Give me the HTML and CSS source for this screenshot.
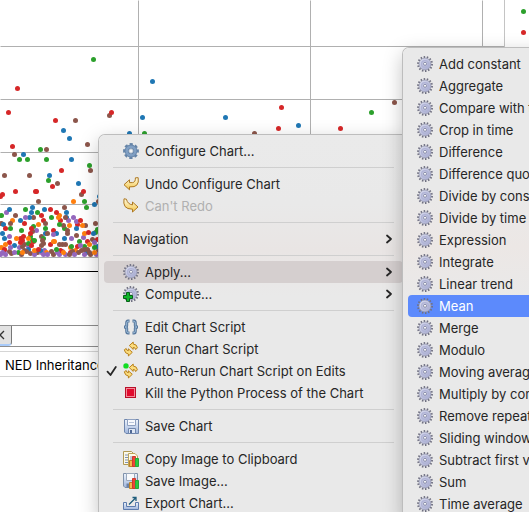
FILE: index.html
```html
<!DOCTYPE html>
<html lang="en">
<head>
<meta charset="utf-8">
<title>Chart editor</title>
<link rel="stylesheet" href="styles.css">
</head>
<body>
<svg class="defs" aria-hidden="true">
  <linearGradient id="lav" x1="0" y1="0" x2="1" y2="1"><stop offset="0" stop-color="#dcdef0"/><stop offset="1" stop-color="#a3a7cc"/></linearGradient>
  <linearGradient id="gold" x1="0" y1="0" x2="0" y2="1"><stop offset="0" stop-color="#fffbe0"/><stop offset="1" stop-color="#f3c548"/></linearGradient>
  <linearGradient id="steel" x1="0" y1="0" x2="0" y2="1"><stop offset="0" stop-color="#eef4fc"/><stop offset="1" stop-color="#9fb5dc"/></linearGradient>
  <symbol id="gear" viewBox="0 0 16 16">
    <circle cx="8" cy="8" r="7" fill="none" stroke="#6f6f80" stroke-width="1.9" stroke-dasharray="1.5 1.642"/>
    <circle cx="8" cy="8" r="6" fill="url(#lav)" stroke="#8d8fa6" stroke-width=".7"/>
    <circle cx="8" cy="8" r="3.4" fill="none" stroke="#b0b4d6" stroke-width="1.4"/>
    <circle cx="8" cy="7.8" r="1.5" fill="#fafafa" stroke="#7a7e9e" stroke-width=".8"/>
  </symbol>
  <symbol id="config" viewBox="0 0 16 16">
    <circle cx="8" cy="8" r="6.7" fill="none" stroke="#6483a6" stroke-width="2.4" stroke-dasharray="3.1 2.162" transform="rotate(-13 8 8)"/>
    <circle cx="8" cy="8" r="4.4" fill="none" stroke="#6786aa" stroke-width="4"/>
    <circle cx="8" cy="8" r="4.3" fill="none" stroke="#809fc3" stroke-width="2.4"/>
    <circle cx="8" cy="8" r="2.2" fill="#f4f4f4" stroke="#5f7d9f" stroke-width=".5"/>
  </symbol>
  <symbol id="undo" viewBox="0 0 16 16">
    <path d="M1 8.7 6.5 3.8V6.6H9.5Q12.6 6.3 12.4 1.8L15.2 1.7Q16 6.8 13.8 9.1Q12 11.2 6.5 10.9V13.8Z" fill="url(#gold)" stroke="#ad7822" stroke-linejoin="round"/>
  </symbol>
  <symbol id="redo" viewBox="0 0 16 16">
    <path d="M15 9 9.5 4V6.9Q4.8 6.4 3.4 1.2L1 .8Q.2 5.6 2 8.5Q4 11.2 9.5 11.2V14Z" fill="url(#gold)" stroke="#ad7822" stroke-linejoin="round"/>
  </symbol>
  <symbol id="compute" viewBox="0 0 16 16">
    <use href="#gear"/>
    <path d="M3.5 6.5h3v3h3v3h-3v3h-3v-3h-3v-3h3Z" fill="#10b52b" stroke="#075f18"/>
  </symbol>
  <symbol id="braces" viewBox="0 0 16 16" fill="none">
    <g stroke="#56779c" stroke-width="3"><path d="M6.5 2H5Q3.7 2 3.7 4V6.5Q3.7 8 1 8Q3.7 8 3.7 9.5V12Q3.7 14 5 14H6.5M9.5 2H11Q12.3 2 12.3 4V6.5Q12.3 8 15 8Q12.3 8 12.3 9.5V12Q12.3 14 11 14H9.5"/></g>
    <g stroke="#9bbbd8"><path d="M6 2.2H5Q3.7 2.2 3.7 4V6.5Q3.7 8 2 8Q3.7 8 3.7 9.5V12Q3.7 13.8 5 13.8H6M10 2.2H11Q12.3 2.2 12.3 4V6.5Q12.3 8 14 8Q12.3 8 12.3 9.5V12Q12.3 13.8 11 13.8H10"/></g>
  </symbol>
  <symbol id="rerun" viewBox="0 0 16 16">
    <g fill="#fbdc7d" stroke="#b9821c" stroke-linejoin="round">
      <path d="M6.3 4.6 10.2 1V3Q14 3.3 14.4 6.8L12.7 8.6Q12.3 6.4 10.2 6.4V8.4Z"/>
      <path d="M9.3 11.3 5.4 15V13Q2 12.7 1.3 8.8L3.2 7.5Q3.5 9.7 5.4 9.7V7.8Z"/>
    </g>
  </symbol>
  <symbol id="autorerun" viewBox="0 0 16 16">
    <use href="#rerun"/>
    <circle cx="3" cy="2.9" r="2.7" fill="#12dc22"/>
  </symbol>
  <symbol id="stop" viewBox="0 0 16 16">
    <rect x="2.5" y="2.5" width="10" height="10" fill="#f48a98" stroke="#b8102a"/>
    <rect x="4" y="4" width="7" height="7" fill="#e00b2d"/>
  </symbol>
  <symbol id="save" viewBox="0 0 16 16">
    <path d="M1.5 1.5H15.5V15.5H3L1.5 14Z" fill="url(#steel)" stroke="#6f86ad"/>
    <path d="M4.5 1.5H12.5V7.5H4.5Z" fill="#f7f9fd" stroke="#8fa1c0"/>
    <path d="M6 4.5H11" stroke="#b9c5da"/>
    <path d="M5.5 10.5H12.5V15.5H5.5Z" fill="#dfe7f4" stroke="#6f86ad"/>
    <path d="M7 12h2v3H7Z" fill="#4f6894"/>
  </symbol>
  <symbol id="bars" viewBox="0 0 16 16">
    <path d="M6.5 9.5h3v6h-3Z" fill="#f2b84c" stroke="#bd8124"/>
    <path d="M9.5 5.5h3v10h-3Z" fill="#ee4536" stroke="#cf3a2e"/>
    <path d="M12.5 7.5h3v8h-3Z" fill="#2ccb3d" stroke="#27a83a"/>
  </symbol>
  <symbol id="copyimg" viewBox="0 0 16 16">
    <path d="M.5.5H8.5L10.5 2.5V13.5H.5Z" fill="#fdf9e8" stroke="#b19a55"/>
    <path d="M2 4H5M2 6.5H5M2 9H5M2 11.5H5" stroke="#7d91b5"/>
    <path d="M5.5 2.5H12L14.5 5V15.5H5.5Z" fill="#fffbe9" stroke="#bda55a"/>
    <path d="M7 6H10M7 8H9" stroke="#8295ba"/>
    <use href="#bars"/>
  </symbol>
  <symbol id="saveimg" viewBox="0 0 16 16">
    <path d="M.5.5H14.5V14.5H2L.5 13Z" fill="url(#steel)" stroke="#7f91ab"/>
    <path d="M3.5.5H11.5V7.5H3.5Z" fill="#f8f9fb" stroke="#9aa8bc"/>
    <path d="M3.5 10.5H8V14.5H3.5Z" fill="#6d81a4"/>
    <use href="#bars"/>
  </symbol>
  <symbol id="export" viewBox="0 0 16 16">
    <path d="M.5 7.5H3.5V11.5H12.5V7.5H15.5V14.5H.5Z" fill="url(#steel)" stroke="#5d7cae"/>
    <path d="M6 9.5 12.5 3M9.5 2.5H13V6" fill="none" stroke="#1e5d7c" stroke-width="1.3"/>
  </symbol>
  <symbol id="tick" viewBox="0 0 12 12">
    <path d="M1.5 6.7 4.5 10 9.8 2" fill="none" stroke="#262626" stroke-width="1.8" stroke-linecap="round" stroke-linejoin="round"/>
  </symbol>
  <symbol id="more" viewBox="0 0 8 10">
    <path d="M2 1.5 6 5 2 8.5" fill="none" stroke="#262626" stroke-width="1.8" stroke-linecap="round" stroke-linejoin="round"/>
  </symbol>
</svg>

<div class="window">
  <main class="editor">
    <svg class="plot" role="img" aria-label="Scatter chart">
      <g class="grid">
        <line x1="0" x2="100%" y1="46" y2="46"/><line x1="0" x2="100%" y1="99" y2="99"/>
        <line x1="0" x2="100%" y1="152" y2="152"/><line x1="0" x2="100%" y1="204" y2="204"/>
        <line x1="138" x2="138" y1="0" y2="257"/><line x1="310" x2="310" y1="0" y2="257"/><line x1="482" x2="482" y1="0" y2="257"/>
      </g>
      <g id="dots"></g>
      <g class="grid"><line x1="0" x2="100%" y1="257" y2="257"/></g>
    </svg>
    <svg class="legend" aria-hidden="true"><circle class="g" cx="18.5" cy="11.5" r="2.5"/><circle class="r" cx="18.5" cy="32.5" r="2.5"/></svg>
  </main>
  <div class="tabs">
    <button class="close" aria-label="Close"><svg viewBox="0 0 5 10"><path d="M-4 1 4 9M4 1-4 9"/></svg></button>
  </div>
  <div class="pane-title">NED Inheritance</div>
</div>

<div class="menu context" role="menu">
  <button role="menuitem"><svg><use href="#config"/></svg>Configure Chart...</button>
  <hr>
  <button role="menuitem"><svg><use href="#undo"/></svg>Undo Configure Chart</button>
  <button role="menuitem" disabled><svg><use href="#redo"/></svg>Can't Redo</button>
  <hr>
  <button role="menuitem">Navigation<svg class="more"><use href="#more"/></svg></button>
  <hr>
  <button role="menuitem" class="open"><svg><use href="#gear"/></svg>Apply...<svg class="more"><use href="#more"/></svg></button>
  <button role="menuitem"><svg><use href="#compute"/></svg>Compute...<svg class="more"><use href="#more"/></svg></button>
  <hr>
  <button role="menuitem"><svg><use href="#braces"/></svg>Edit Chart Script</button>
  <button role="menuitem"><svg><use href="#rerun"/></svg>Rerun Chart Script</button>
  <button role="menuitemcheckbox" aria-checked="true" class="checked"><svg class="tick"><use href="#tick"/></svg><svg><use href="#autorerun"/></svg>Auto-Rerun Chart Script on Edits</button>
  <button role="menuitem"><svg><use href="#stop"/></svg>Kill the Python Process of the Chart</button>
  <hr>
  <button role="menuitem"><svg><use href="#save"/></svg>Save Chart</button>
  <hr>
  <button role="menuitem"><svg><use href="#copyimg"/></svg>Copy Image to Clipboard</button>
  <button role="menuitem"><svg><use href="#saveimg"/></svg>Save Image...</button>
  <button role="menuitem"><svg><use href="#export"/></svg>Export Chart...</button>
</div>

<div class="menu submenu" role="menu">
  <button role="menuitem"><svg><use href="#gear"/></svg>Add constant</button>
  <button role="menuitem"><svg><use href="#gear"/></svg>Aggregate</button>
  <button role="menuitem"><svg><use href="#gear"/></svg>Compare with threshold</button>
  <button role="menuitem"><svg><use href="#gear"/></svg>Crop in time</button>
  <button role="menuitem"><svg><use href="#gear"/></svg>Difference</button>
  <button role="menuitem"><svg><use href="#gear"/></svg>Difference quotient</button>
  <button role="menuitem"><svg><use href="#gear"/></svg>Divide by constant</button>
  <button role="menuitem"><svg><use href="#gear"/></svg>Divide by time</button>
  <button role="menuitem"><svg><use href="#gear"/></svg>Expression</button>
  <button role="menuitem"><svg><use href="#gear"/></svg>Integrate</button>
  <button role="menuitem"><svg><use href="#gear"/></svg>Linear trend</button>
  <button role="menuitem" class="active"><svg><use href="#gear"/></svg>Mean</button>
  <button role="menuitem"><svg><use href="#gear"/></svg>Merge</button>
  <button role="menuitem"><svg><use href="#gear"/></svg>Modulo</button>
  <button role="menuitem"><svg><use href="#gear"/></svg>Moving average</button>
  <button role="menuitem"><svg><use href="#gear"/></svg>Multiply by constant</button>
  <button role="menuitem"><svg><use href="#gear"/></svg>Remove repeats</button>
  <button role="menuitem"><svg><use href="#gear"/></svg>Sliding window average</button>
  <button role="menuitem"><svg><use href="#gear"/></svg>Subtract first value</button>
  <button role="menuitem"><svg><use href="#gear"/></svg>Sum</button>
  <button role="menuitem"><svg><use href="#gear"/></svg>Time average</button>
</div>
<script src="chart.js"></script>
</body>
</html>
```
FILE: styles.css
```css
* { box-sizing: border-box; }

body {
  margin: 0;
  height: 100vh;
  position: relative;
  overflow: hidden;
  background: #fff;
  color: #262626;
  font: 13px/22px Inter, "Liberation Sans", sans-serif;
}

button { font: inherit; color: inherit; border: 0; background: none; }

.defs { position: absolute; width: 0; height: 0; }

.editor {
  display: flex;
  height: 272px;
  border-bottom: 1px solid #000;
}
.plot { flex: 1; min-width: 0; height: 100%; }
.legend { width: 25px; height: 100%; border-left: 1px solid #c4c4c4; }
.grid line { stroke: #b0b0b0; stroke-width: 1; transform: translate(0.5px, 0.5px); }

.b { fill: #1f77b4; }
.o { fill: #ff7f0e; }
.g { fill: #2ca02c; }
.r { fill: #d62728; }
.p { fill: #9467bd; }
.n { fill: #8c564b; }

.tabs {
  display: flex;
  height: 22px;
  margin-top: 53px;
  border: solid #8e8e8e;
  border-width: 1px 0;
}
.close {
  width: 12px;
  height: 20px;
  padding: 0;
  background: #e2e2e2;
  border-right: 1px solid #777;
  border-bottom: 2px solid #a9cbfa;
  border-bottom-right-radius: 4px;
}
.close svg { display: block; width: 5px; height: 10px; }
.close path { fill: none; stroke: #333; stroke-width: 1.3; }

.pane-title {
  height: 26px;
  margin-top: 4px;
  padding: 2px 5px;
  border: solid #d5d5d5;
  border-width: 1px 0;
  color: #000;
}

.menu {
  position: absolute;
  padding: 5px;
  border-radius: 6px;
  white-space: nowrap;
  box-shadow: 0 0 0 1px #bdbdbd, 0 6px 20px rgba(0, 0, 0, 0.26);
}
.context {
  top: 135px;
  left: 99px;
  width: 309px;
  background: linear-gradient(#eaeaea, #e9e9e9 18%, #e9e5e4 30%, #e9e9e9 42%);
}
.submenu {
  top: 48px;
  left: 403px;
  width: 190px;
  background: linear-gradient(#e9e9e9 30%, #ece7e5 42%, #e9e9e9 54%);
}

.menu button {
  display: flex;
  align-items: center;
  gap: 6px;
  width: 100%;
  height: 22px;
  padding: 0 10px 0 19px;
  border-radius: 4px;
}
.menu svg { flex: none; width: 16px; height: 16px; }
.menu .more { width: 8px; height: 10px; margin-left: auto; }
.menu .tick { width: 12px; height: 12px; margin-right: -1px; }
.menu .checked { padding-left: 2px; }
.submenu button { padding-left: 9px; }
.menu button:disabled { color: #b0b0b0; }
.menu .open { background: #d5cfcf; }
.menu .active { background: #5c8afc; color: #fff; }

.menu hr {
  height: 1px;
  margin: 5px 9px;
  border: 0;
  background: #cfcfcf;
}
```
FILE: chart.js
```js
// Points per series colour class, as "x,y" pairs in plot pixels.
const series = {
  b: "152,81 142,117 63,130 69,138 129,133 225,117 298,125 23,154 71,159 49,175 78,183 94,204 99,196 9,209 32,207 31,212 44,209 66,212 29,217 66,217 20,220 76,228 2,233 45,233 56,233 93,233 4,238 28,249 40,250 97,246 64,238 3,224 14,245 86,252",
  o: "73,201 12,220 59,215 69,225 82,225 58,217 84,233 54,241 5,244 53,241 28,238 75,250 94,252 46,252 22,252 63,252 38,224 16,238 89,244 1,247 34,250 70,247",
  g: "93,59 144,133 371,112 40,149 46,159 19,159 27,159 89,165 48,180 84,201 86,207 25,209 37,212 51,217 1,215 45,228 10,228 21,230 59,224 64,228 97,229 95,232 32,240 34,240 30,236 71,246 33,226 18,252 56,249 94,247 79,241 43,238 28,243 84,246",
  r: "17,88 8,112 111,112 55,120 281,107 278,128 340,128 329,136 12,146 61,170 52,186 15,191 35,191 36,191 83,191 2,194 0,196 50,209 56,212 41,215 24,223 43,220 60,220 80,220 77,224 5,228 31,228 53,230 88,232 30,233 20,238 97,239 50,244 9,242 20,242 22,240 23,236 33,241 87,241 38,249 60,250 70,252 31,245 4,249 77,246",
  p: "6,212 25,217 68,220 73,217 76,221 36,230 53,234 9,236 71,238 83,237 2,252 4,250 5,254 0,254 14,252 34,254 44,250 43,254 47,254 41,252 57,252 62,251 59,254 74,254 84,254 94,242 96,254 19,247 10,247 65,254 28,246 80,245",
  n: "109,115 75,120 394,102 254,133 46,149 87,144 14,154 90,170 4,175 29,175 57,183 81,194 38,201 98,201 64,207 15,215 33,217 10,223 45,223 1,223 65,217 63,225 85,225 95,223 32,231 47,233 67,233 67,230 42,240 41,236 43,243 92,239 22,246 24,244 62,244 65,244 59,244 41,245 9,251 11,253 21,254 24,250 26,251 30,253 37,252 51,251 53,254 69,254 72,251 78,252 81,250 84,249 87,249 89,252 90,254 98,250 76,235"
};

const order = [];
for (const [name, pairs] of Object.entries(series)) {
  pairs.split(" ").forEach((pair, i) => order.push({ name, i, at: pair.split(",").map(Number) }));
}
order.sort((a, b) => (a.i * 7) % 11 - (b.i * 7) % 11);

const layer = document.getElementById("dots");
for (const { name, at } of order) {
  const dot = document.createElementNS("http://www.w3.org/2000/svg", "circle");
  dot.setAttribute("class", name);
  dot.setAttribute("cx", at[0] + 0.5);
  dot.setAttribute("cy", at[1] + 0.5);
  dot.setAttribute("r", 2.5);
  layer.append(dot);
}
```
